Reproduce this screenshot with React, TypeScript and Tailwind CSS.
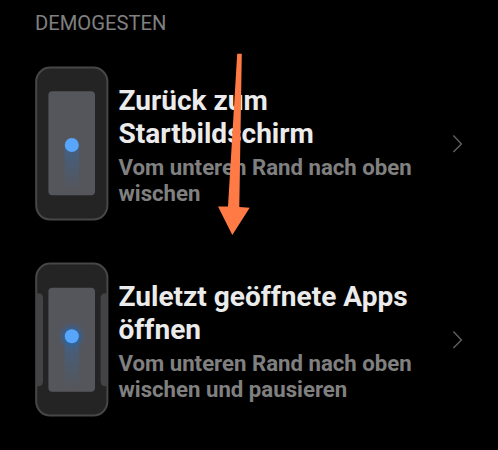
type Gesture = {
  title: string
  description: string
  recents: boolean
}

const gestures: Gesture[] = [
  {
    title: "Zurück zum Startbildschirm",
    description: "Vom unteren Rand nach oben wischen",
    recents: false,
  },
  {
    title: "Zuletzt geöffnete Apps öffnen",
    description: "Vom unteren Rand nach oben wischen und pausieren",
    recents: true,
  },
]

function PhoneIcon({ recents }: { recents: boolean }) {
  const id = recents ? "recents" : "home"
  const screenY = recents ? 25.8 : 25.2
  const dotY = recents ? 74.2 : 79

  return (
    <svg width="74" height="156" viewBox="0 0 74 156" className="shrink-0">
      <defs>
        <linearGradient id={`trail-${id}`} x1="0" y1="0" x2="0" y2="1">
          <stop offset="0" stopColor="#3a6595" stopOpacity="0.75" />
          <stop offset="1" stopColor="#3f5f85" stopOpacity="0" />
        </linearGradient>
        <radialGradient id={`glow-${id}`}>
          <stop offset="0.4" stopColor="#2566ab" stopOpacity="0.8" />
          <stop offset="1" stopColor="#3a5f8c" stopOpacity="0" />
        </radialGradient>
      </defs>
      <rect x="1.2" y="1.6" width="71.2" height="152" rx="14" fill="#242424" stroke="#474747" strokeWidth="2" />
      {recents && (
        <>
          <path d="M1 31.3h2.2q4.8 0 4.8 5v83q0 5-4.8 5H1z" fill="#434346" />
          <path d="M72.6 31.3h-2.2q-4.8 0-4.8 5v83q0 5 4.8 5h2.2z" fill="#434346" />
        </>
      )}
      <rect x="13.4" y={screenY} width="46.6" height="104" rx="4" fill="#55565c" />
      <rect x="29.7" y={dotY} width="14.2" height={recents ? 51 : 45} fill={`url(#trail-${id})`} />
      {recents && <circle cx="36.8" cy={dotY} r="14.5" fill={`url(#glow-${id})`} />}
      <circle cx="36.8" cy={dotY} r="7" fill="#58a6fb" />
    </svg>
  )
}

function GestureRow({ title, description, recents }: Gesture) {
  return (
    <button type="button" className="flex h-[156px] w-full items-center text-left">
      <PhoneIcon recents={recents} />
      <div className="ml-[9.5px] w-[310px] shrink-0 pt-[2px]">
        <h2 className="text-[28.05px] leading-[33px] font-bold text-[#ebebeb]">{title}</h2>
        <p className="mt-1 text-[22.2px] leading-[26px] font-bold text-[#808080]">{description}</p>
      </div>
      <svg width="12" height="20" viewBox="0 0 12 20" fill="none" className="ml-[23px] shrink-0">
        <path d="M1.4 1.6l8 8.3-8 8.2" stroke="#606060" strokeWidth="1.4" />
      </svg>
    </button>
  )
}

export default function App() {
  return (
    <main className="relative h-[450px] w-[498px] overflow-hidden bg-black pt-[11px] pl-[35px] font-['Roboto',sans-serif]">
      <h1 className="text-[20.2px] leading-6 font-normal text-[#808080]">DEMOGESTEN</h1>
      <div className="mt-[31px] flex flex-col gap-10">
        {gestures.map((gesture) => (
          <GestureRow key={gesture.title} {...gesture} />
        ))}
      </div>
      <svg width="32" height="182" viewBox="0 0 32 182" className="pointer-events-none absolute top-[53px] left-[218px]">
        <path d="M19.2.8h4.6L21.3 154l10.4.8L14.3 182 0 153.5h10z" fill="#ff7a45" />
      </svg>
    </main>
  )
}
